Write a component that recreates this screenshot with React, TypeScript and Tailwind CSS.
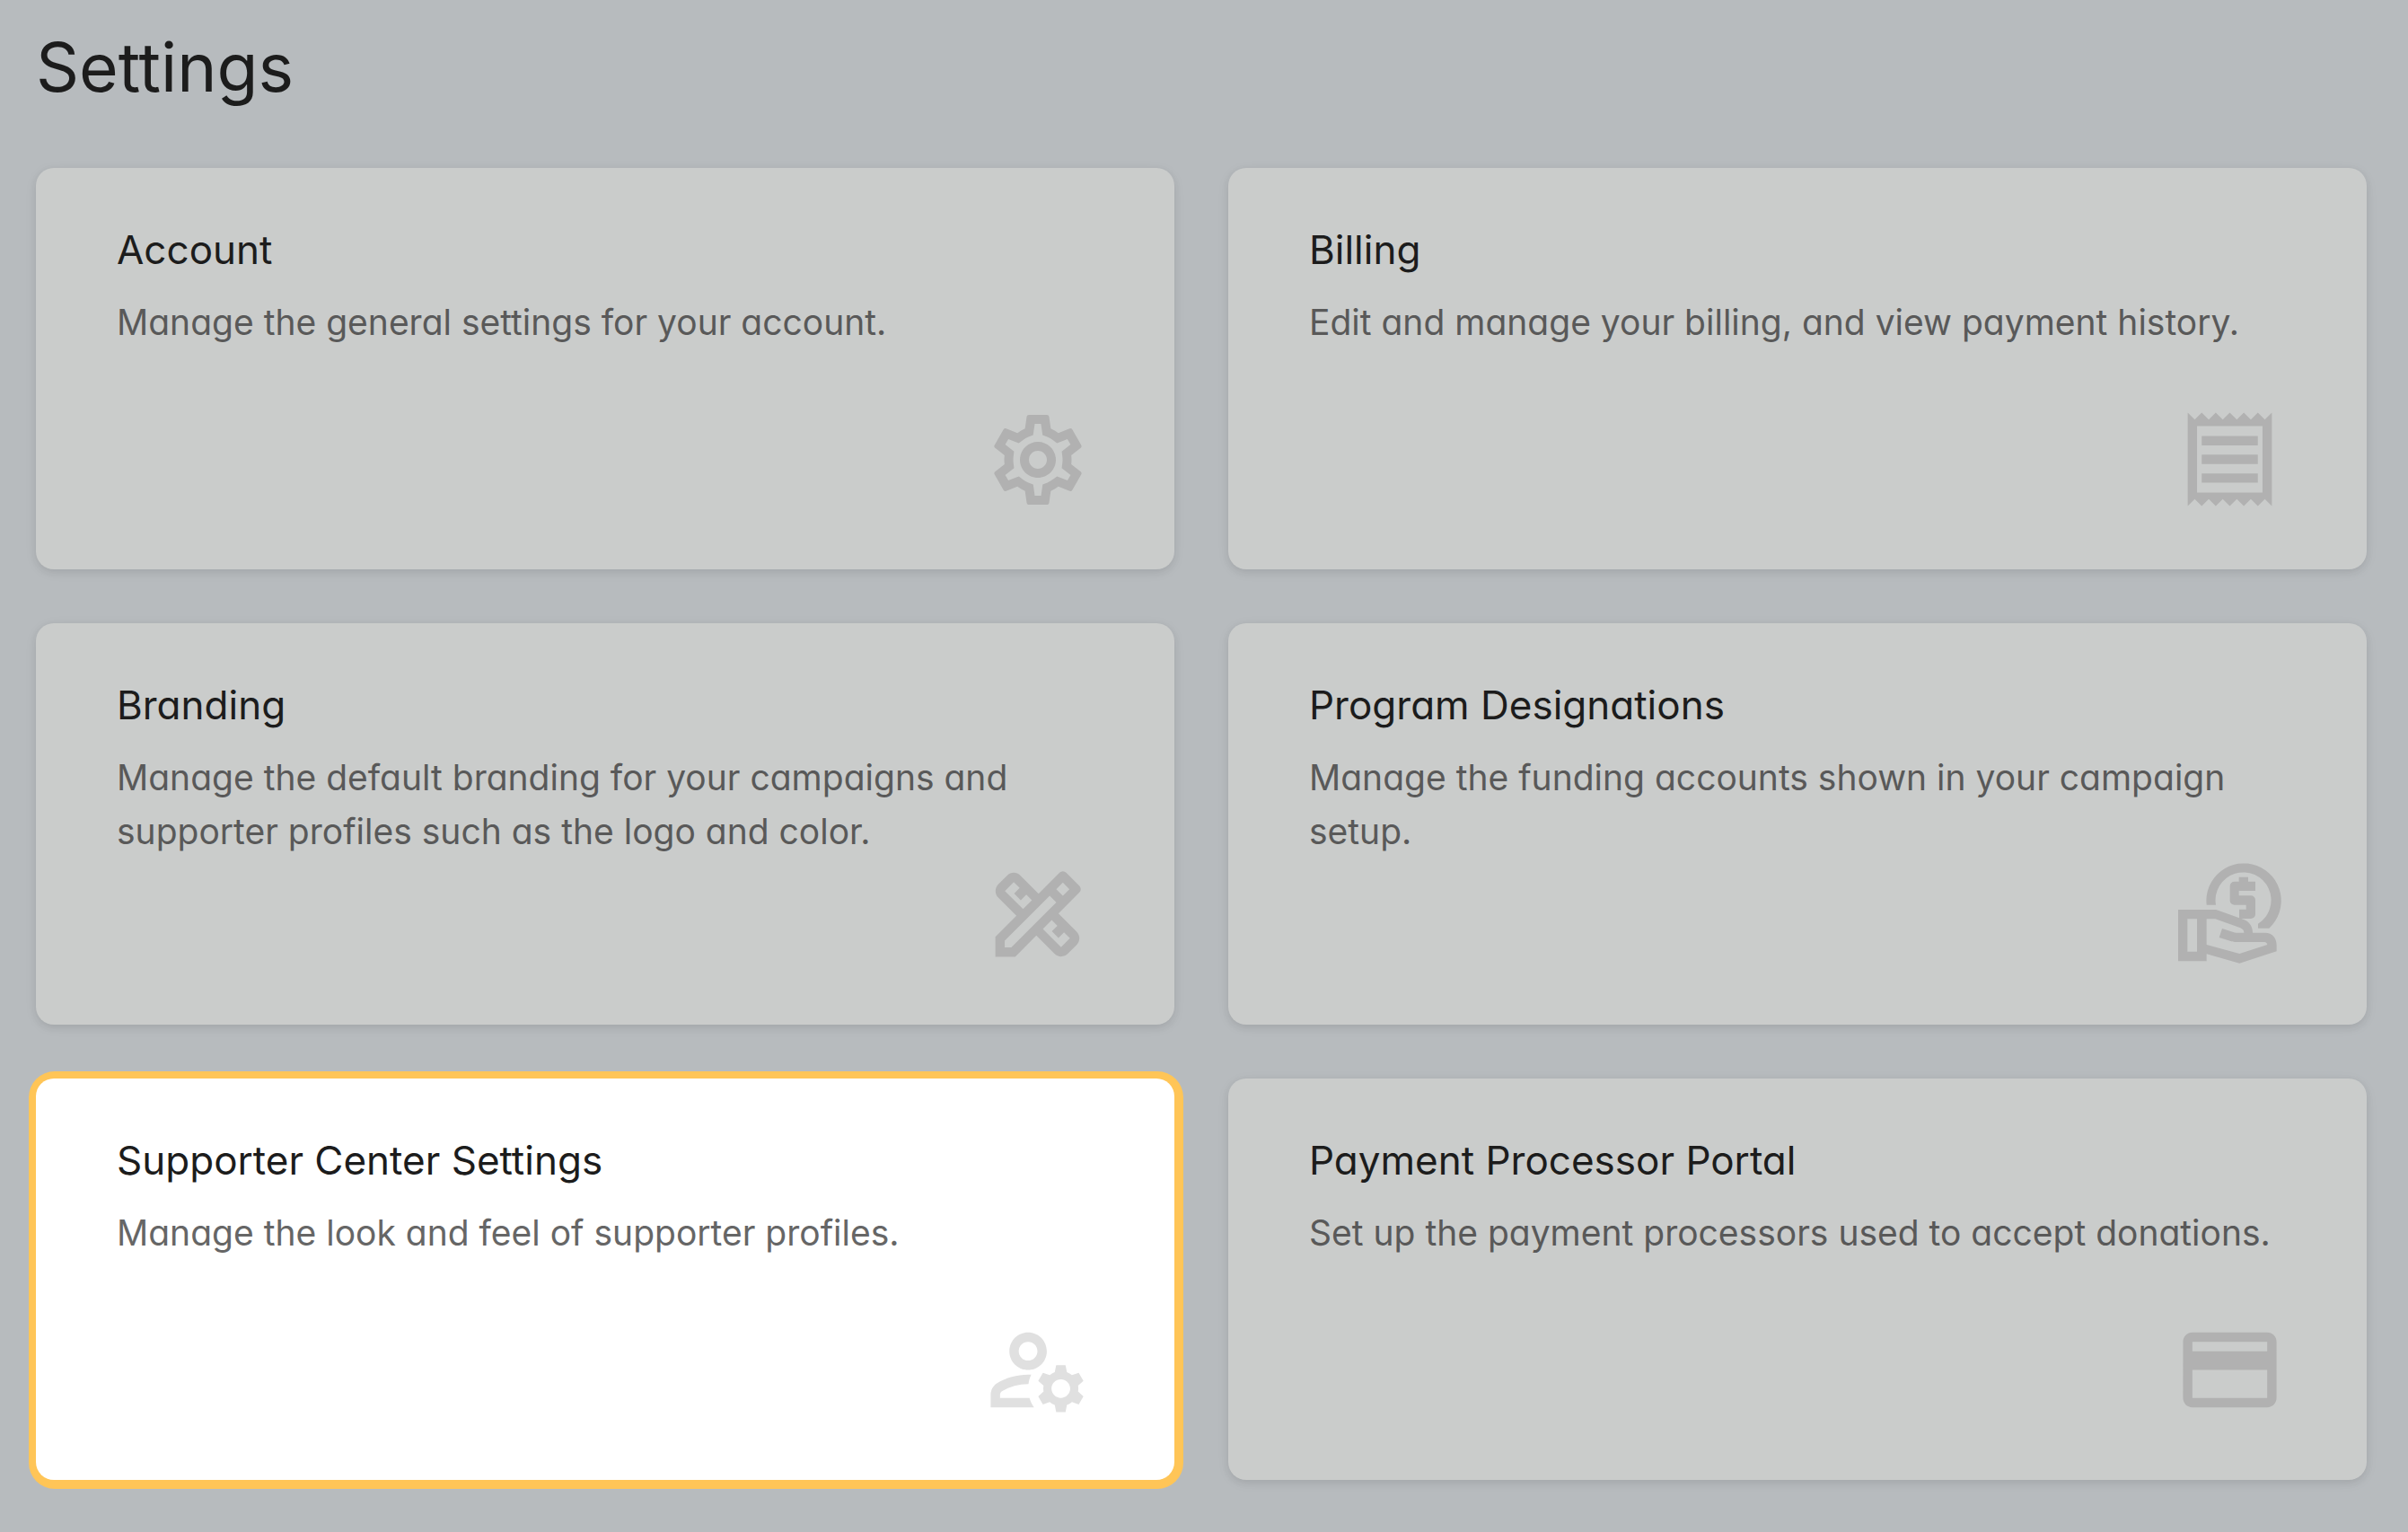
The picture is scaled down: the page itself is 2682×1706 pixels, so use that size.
import type { ComponentType } from "react";
import {
  MdOutlineDesignServices,
  MdOutlineManageAccounts,
  MdOutlinePayment,
  MdOutlineReceipt,
  MdOutlineSettings,
} from "react-icons/md";
import clsx from "clsx";

type IconProps = { className?: string };

/** Open hand holding a dollar coin. */
function HandCoinIcon({ className }: IconProps) {
  return (
    <svg className={className} viewBox="63 52 375 375" fill="currentColor" aria-hidden="true">
      <path d="M173 207A125 125 0 1 1 382 285H345V270A93 93 0 1 0 204 207Z" />
      <path d="M281 114H312V129H336V160H281V176H321a15 15 0 0 1 15 15V238a15 15 0 0 1-15 15H282V222H305V207H266a15 15 0 0 1-15-15V144a15 15 0 0 1 15-15H281Z" />
      <path
        fillRule="evenodd"
        d="M78 223H205L297 256C317 263 327 280 327 300H368C393 300 407 318 407 342V362L283 402L173 371V395H78ZM109 254V363H141V254ZM173 254V340L283 370L376 340C375 334 371 331 366 331H272C266 331 261 331 256 329L215 316L225 286L262 298C265 299 268 300 272 300H298C298 292 293 287 286 284L202 254Z"
      />
    </svg>
  );
}

type Setting = {
  title: string;
  description: string;
  href: string;
  icon: ComponentType<IconProps>;
  iconSize?: string;
  highlighted?: boolean;
};

const settings: Setting[] = [
  {
    title: "Account",
    description: "Manage the general settings for your account.",
    href: "#account",
    icon: MdOutlineSettings,
    iconSize: "size-[120px]",
  },
  {
    title: "Billing",
    description: "Edit and manage your billing, and view payment history.",
    href: "#billing",
    icon: MdOutlineReceipt,
  },
  {
    title: "Branding",
    description:
      "Manage the default branding for your campaigns and supporter profiles such as the logo and color.",
    href: "#branding",
    icon: MdOutlineDesignServices,
  },
  {
    title: "Program Designations",
    description: "Manage the funding accounts shown in your campaign setup.",
    href: "#program-designations",
    icon: HandCoinIcon,
  },
  {
    title: "Supporter Center Settings",
    description: "Manage the look and feel of supporter profiles.",
    href: "#supporter-center",
    icon: MdOutlineManageAccounts,
    highlighted: true,
  },
  {
    title: "Payment Processor Portal",
    description: "Set up the payment processors used to accept donations.",
    href: "#payment-processors",
    icon: MdOutlinePayment,
  },
];

function SettingCard({
  title,
  description,
  href,
  icon: Icon,
  iconSize = "size-[125px]",
  highlighted,
}: Setting) {
  return (
    <a
      href={href}
      className={clsx(
        "flex min-h-[447px] flex-col rounded-[20px] px-[90px] pt-[60px] pb-[60px]",
        highlighted
          ? "bg-white shadow-[1px_1px_0_9px_#ffc557]"
          : "bg-[#cacccb] shadow-[0_3px_8px_rgba(0,0,0,0.07),0_3px_15px_rgba(0,0,0,0.05)]",
      )}
    >
      <h2 className="mb-5 text-[44px] leading-[62px] text-[#1c1c1c]">{title}</h2>
      <p
        className={clsx(
          "text-[39px] leading-[60px]",
          highlighted ? "text-[#666666]" : "text-[#595959]",
        )}
      >
        {description}
      </p>
      <span
        className={clsx(
          "mt-auto grid size-[125px] shrink-0 place-items-center self-end",
          highlighted ? "text-[#e0e0e0]" : "text-[#b1b1b1]",
        )}
      >
        <Icon className={iconSize} />
      </span>
    </a>
  );
}

export default function App() {
  return (
    <main className="min-h-screen bg-[#b7bbbe] pt-[30px] pr-[46px] pb-14 pl-10 font-['Inter','Open_Sans',sans-serif] [font-feature-settings:'cv11']">
      <h1 className="mb-[67px] text-[75px] leading-[90px] text-[#1c1c1c]">Settings</h1>
      <div className="grid grid-cols-2 gap-[60px]">
        {settings.map((setting) => (
          <SettingCard key={setting.title} {...setting} />
        ))}
      </div>
    </main>
  );
}
